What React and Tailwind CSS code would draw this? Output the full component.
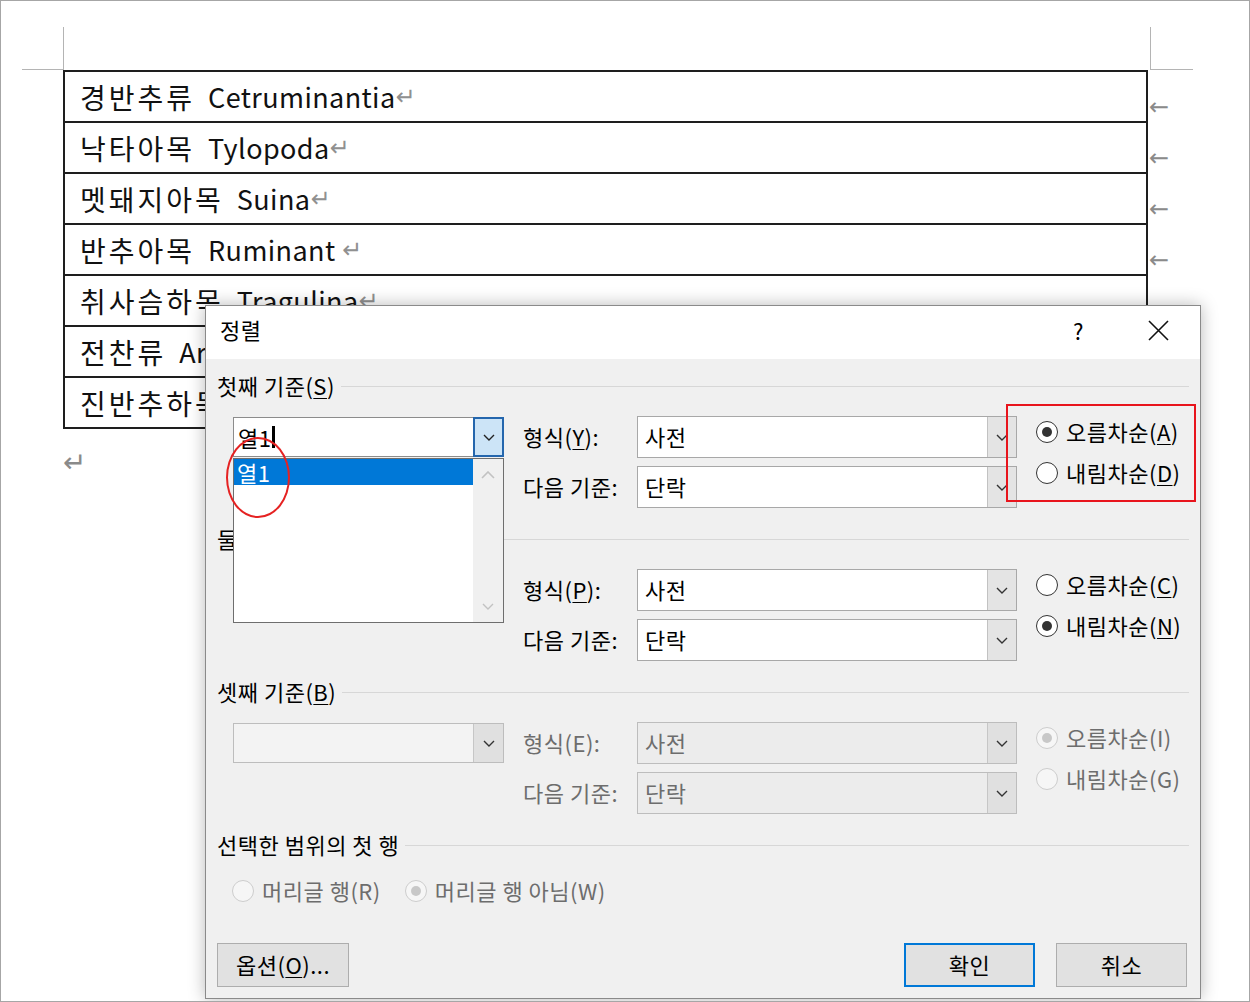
import React from 'react';

const rows = [
  ['경반추류', 'Cetruminantia'],
  ['낙타아목', 'Tylopoda'],
  ['멧돼지아목', 'Suina'],
  ['반추아목', 'Ruminant '],
  ['취사슴하목', 'Tragulina'],
  ['전찬류', 'Artiodactyla'],
  ['진반추하목', 'Pecora'],
];

const Chevron = ({ color = '#333333' }) => (
  <svg width="12" height="7" viewBox="0 0 12 7" fill="none">
    <path d="M1 1L6 6L11 1" stroke={color} strokeWidth="1.4" />
  </svg>
);

const ChevronUp = ({ color = '#c2c2c2' }) => (
  <svg width="14" height="8" viewBox="0 0 14 8" fill="none">
    <path d="M1 7L7 1L13 7" stroke={color} strokeWidth="1.6" />
  </svg>
);

// "text(K)tail" with the access key underlined unless disabled
const Lab = ({ text, k, tail = '', off }) => (
  <>
    {text}(
    {off ? k : <span className="underline underline-offset-[3px] decoration-1">{k}</span>}){tail}
  </>
);

const Combo = ({ value, disabled }) => (
  <div
    className={`flex h-[42px] border ${
      disabled ? 'border-[#bdbdbd] bg-[#ececec] text-[#6d6d6d]' : 'border-[#a8a8a8] bg-white text-black'
    }`}
  >
    <div className="flex-1 flex items-center pl-[7px] pb-[2px] text-[22px] leading-none">{value}</div>
    <div
      className={`w-[29px] flex items-center justify-center border-l ${
        disabled ? 'border-[#c6c6c6] bg-[#e0e0e0]' : 'border-[#c2c2c2] bg-[#e4e4e4]'
      }`}
    >
      <Chevron />
    </div>
  </div>
);

const Radio = ({ checked, disabled, children }) => (
  <div className="flex items-center h-[22px] gap-[8px]">
    <span
      className={`w-[22px] h-[22px] shrink-0 rounded-full border-[1.5px] flex items-center justify-center ${
        disabled ? 'border-[#cdcdcd] bg-[#f6f6f6]' : 'border-[#333333] bg-white'
      }`}
    >
      {checked && (
        <span className={`w-[10px] h-[10px] rounded-full ${disabled ? 'bg-[#c8c8c8]' : 'bg-[#333333]'}`} />
      )}
    </span>
    <span className={`text-[22px] leading-none pb-[3px] whitespace-nowrap ${disabled ? 'text-[#6d6d6d]' : 'text-black'}`}>{children}</span>
  </div>
);

const Header = ({ children }) => (
  <div className="flex items-center h-[24px]">
    <span className="text-[22px] leading-none pb-[2px] text-black whitespace-nowrap">{children}</span>
    <div className="flex-1 h-px bg-[#d7d7d7] ml-[6px]" />
  </div>
);

const Section = ({ title, left, labels, values, radios, disabled }) => (
  <div className="mb-[19px]">
    <Header>{title}</Header>
    <div className="mt-[18px] flex pl-[16px]">
      <div className="w-[271px] pt-[1px] relative">{left}</div>
      <div className={`ml-[19px] w-[114px] flex flex-col gap-[8px] text-[22px] leading-none whitespace-nowrap ${disabled ? 'text-[#6d6d6d]' : 'text-black'}`}>
        <div className="h-[42px] flex items-center pb-[2px]">{labels[0]}</div>
        <div className="h-[42px] flex items-center pb-[2px]">{labels[1]}</div>
      </div>
      <div className="w-[380px] flex flex-col gap-[8px]">
        <Combo value={values[0]} disabled={disabled} />
        <Combo value={values[1]} disabled={disabled} />
      </div>
      <div className="ml-[19px] pt-[5px] flex flex-col gap-[19px]">{radios}</div>
    </div>
  </div>
);

const LeftCombo = ({ disabled, children }) => (
  <div className={`flex h-[40px] border ${disabled ? 'border-[#bdbdbd] bg-[#f3f3f3]' : 'border-[#8c8c8c] bg-white'}`}>
    <div className="flex-1 flex items-center pl-[4px] text-[22px] leading-none">{children}</div>
    <div className={`w-[30px] flex items-center justify-center border-l ${disabled ? 'border-[#c6c6c6] bg-[#e0e0e0]' : 'border-[#c2c2c2] bg-[#e4e4e4]'}`}>
      <Chevron />
    </div>
  </div>
);

export default function App() {
  return (
    <div className="relative w-[1250px] h-[1002px] overflow-hidden bg-white border border-[#a6a6a6] font-['Noto_Sans_CJK_KR',sans-serif]">
      {/* document page */}
      <div className="pt-[26px]">
        <div className="ml-[21px] flex h-[43px]">
          <div className="w-[42px] border-r border-b border-[#b4b4b4]" />
          <div className="w-[1086px]" />
          <div className="w-[43px] border-l border-b border-[#b4b4b4]" />
        </div>
        <div className="ml-[62px] flex flex-col">
          {rows.map(([ko, en], i) => (
            <div key={i} className="flex items-end">
              <div
                className={`w-[1085px] h-[51px] border-x-2 border-t-2 border-[#1e1e1e] flex items-center pl-[15px] leading-none text-[#111] ${
                  i === rows.length - 1 ? 'border-b-2 h-[53px]' : ''
                }`}
              >
                <span className="text-[28px] tracking-[3px]">{ko}</span>{' '}
                <span className="ml-[13px] text-[27px] tracking-[0.4px] whitespace-pre">{en}</span>
                <span className="text-[24px] text-[#909090] font-['DejaVu_Sans',sans-serif]">↵</span>
              </div>
              <span className="ml-[1px] mb-[2px] text-[24px] leading-none text-[#8a8a8a] font-['DejaVu_Sans',sans-serif]">←</span>
            </div>
          ))}
        </div>
        <div className="mt-[20px] ml-[62px] text-[28px] leading-none text-[#8a8a8a] font-['DejaVu_Sans',sans-serif]">↵</div>
      </div>

      {/* sort dialog */}
      <div className="absolute left-[204px] top-[304px] w-[996px] h-[694px] border border-[#8a8a8a] bg-[#f0f0f0] shadow-[0_0_16px_rgba(0,0,0,0.28)] flex flex-col tracking-[0.5px]">
        <div className="h-[53px] bg-white flex items-center pl-[14px] pr-[31px]">
          <span className="text-[22px] leading-none text-black pb-[8px]">정렬</span>
          <span className="ml-auto text-[22px] leading-none text-black pb-[5px]">?</span>
          <svg className="ml-[64px] mb-[4px]" width="21" height="21" viewBox="0 0 21 21" fill="none">
            <path d="M1 1L20 20M20 1L1 20" stroke="#111" strokeWidth="1.6" />
          </svg>
        </div>

        <div className="flex-1 px-[11px] pt-[15px]">
          <Section
            title={<Lab text="첫째 기준" k="S" />}
            left={
              <>
                <div className="flex h-[40px] border border-[#8c8c8c] bg-white">
                  <div className="flex-1 flex items-center pl-[4px] text-[22px] leading-none text-black">
                    열1
                    <span className="ml-[1px] w-[3px] h-[22px] bg-black" />
                  </div>
                  <div className="w-[31px] -my-px -mr-px flex items-center justify-center border-2 border-[#2466ad] bg-[#cce4f7]">
                    <Chevron color="#222" />
                  </div>
                </div>
                <div className="absolute left-0 top-[42px] z-10 w-[271px] h-[165px] border border-[#6e6e6e] bg-white flex">
                  <div className="flex-1">
                    <div className="h-[26px] bg-[#0078d7] text-white text-[22px] leading-none flex items-center pl-[3px]">열1</div>
                  </div>
                  <div className="w-[30px] bg-[#f0f0f0] flex flex-col items-center justify-between pt-[12px] pb-[12px]">
                    <ChevronUp />
                    <Chevron color="#c2c2c2" />
                  </div>
                </div>
              </>
            }
            labels={[<Lab key="a" text="형식" k="Y" tail=":" />, '다음 기준:']}
            values={['사전', '단락']}
            radios={
              <>
                <Radio checked>
                  <Lab text="오름차순" k="A" />
                </Radio>
                <Radio>
                  <Lab text="내림차순" k="D" />
                </Radio>
              </>
            }
          />
          <Section
            title={<Lab text="둘째 기준" k="T" />}
            left={<LeftCombo>(없음)</LeftCombo>}
            labels={[<Lab key="a" text="형식" k="P" tail=":" />, '다음 기준:']}
            values={['사전', '단락']}
            radios={
              <>
                <Radio>
                  <Lab text="오름차순" k="C" />
                </Radio>
                <Radio checked>
                  <Lab text="내림차순" k="N" />
                </Radio>
              </>
            }
          />
          <Section
            title={<Lab text="셋째 기준" k="B" />}
            left={<LeftCombo disabled />}
            labels={[<Lab key="a" text="형식" k="E" tail=":" off />, '다음 기준:']}
            values={['사전', '단락']}
            disabled
            radios={
              <>
                <Radio checked disabled>
                  <Lab text="오름차순" k="I" off />
                </Radio>
                <Radio disabled>
                  <Lab text="내림차순" k="G" off />
                </Radio>
              </>
            }
          />

          <Header>선택한 범위의 첫 행</Header>
          <div className="mt-[23px] pl-[15px] flex gap-[24px]">
            <Radio disabled>
              <Lab text="머리글 행" k="R" off />
            </Radio>
            <Radio checked disabled>
              <Lab text="머리글 행 아님" k="W" off />
            </Radio>
          </div>

          <div className="mt-[41px] flex">
            <button className="w-[132px] h-[44px] border border-[#adadad] bg-[#e1e1e1] text-[22px] leading-none pb-[2px] text-black">
              <Lab text="옵션" k="O" tail="..." />
            </button>
            <button className="ml-auto w-[131px] h-[44px] border-2 border-[#0078d7] bg-[#e1e1e1] text-[22px] leading-none pb-[2px] text-black">
              확인
            </button>
            <button className="ml-[21px] mr-[2px] w-[131px] h-[44px] border border-[#adadad] bg-[#e1e1e1] text-[22px] leading-none pb-[2px] text-black">
              취소
            </button>
          </div>
        </div>

        {/* annotations */}
        <div className="absolute left-[20px] top-[131px] w-[64px] h-[81px] rounded-[50%] border-2 border-[#e52222] z-20" />
        <div className="absolute left-[800px] top-[98px] w-[190px] h-[98px] border-2 border-[#e8141c] z-20" />
      </div>
    </div>
  );
}
